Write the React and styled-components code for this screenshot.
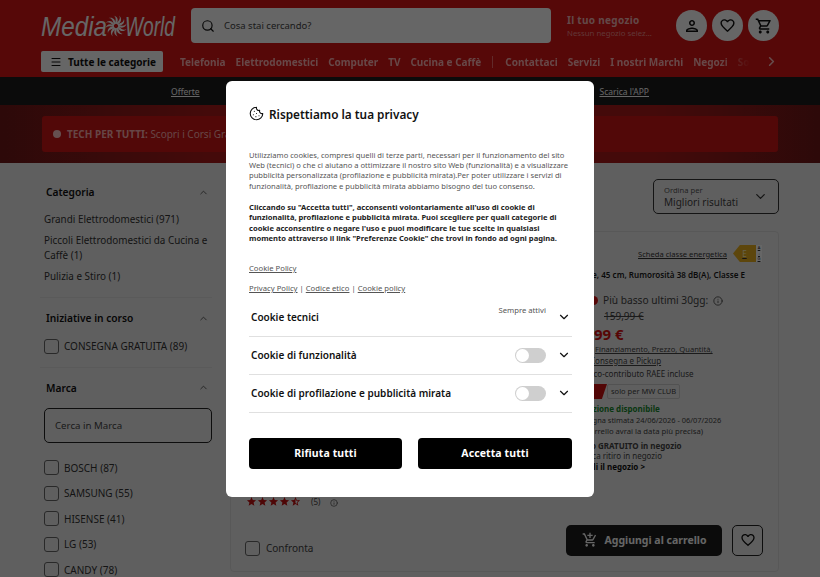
import React from "react";
import styled, { createGlobalStyle } from "styled-components";
import { Search, Menu, ChevronDown, ChevronUp, ChevronRight, Cookie, Info } from "lucide-react";
import { MdOutlinePerson, MdFavoriteBorder, MdOutlineShoppingCart, MdOutlineAddShoppingCart, MdStar, MdStarHalf } from "react-icons/md";

const GlobalStyle = createGlobalStyle`
  html, body { margin: 0; padding: 0; height: 577px; overflow: hidden; }
  body { font-family: "Noto Sans", sans-serif; background: #eeeeee; color: #1a1a1a; }
  * { box-sizing: border-box; }
`;

const Page = styled.div`
  position: relative;
  width: 820px;
  height: 577px;
  overflow: hidden;
`;

// header
const Header = styled.header`
  height: 77px;
  background: #d81414;
  padding: 8px 41px 0;
`;

const TopRow = styled.div`
  display: flex;
  align-items: center;
  height: 35px;
`;

const LogoSvg = styled.svg`
  width: 134px;
  height: 35px;
  flex: none;
  margin-right: 16px;
  overflow: visible;
`;

const SearchBar = styled.div`
  width: 360px;
  height: 35px;
  flex: none;
  background: #fff;
  border-radius: 4px;
  display: flex;
  align-items: center;
  gap: 9px;
  padding-left: 10px;
  font-size: 9.5px;
  color: #444;
`;

const Store = styled.div`
  margin-left: 16px;
  width: 109px;
  color: #fff;
`;

const StoreTitle = styled.div`
  font-size: 10px;
  font-weight: 700;
  letter-spacing: 0.3px;
  line-height: 14px;
  color: #f5b5b5;
`;

const StoreSub = styled.div`
  font-size: 7.8px;
  line-height: 12px;
  color: #f08a8a;
`;

const IconRow = styled.div`
  display: flex;
  gap: 5px;
  margin-left: auto;
`;

const RoundIcon = styled.div`
  width: 31px;
  height: 31px;
  border-radius: 50%;
  background: #fff;
  color: #111;
  display: flex;
  align-items: center;
  justify-content: center;
`;

const NavRow = styled.div`
  display: flex;
  align-items: center;
  margin-top: 8px;
  height: 21px;
`;

const AllButton = styled.div`
  width: 122px;
  height: 21px;
  flex: none;
  background: #fff;
  border-radius: 2px;
  display: flex;
  align-items: center;
  gap: 6px;
  padding-left: 9px;
  font-size: 10px;
  font-weight: 700;
  white-space: nowrap;
  color: #111;
  margin-right: 17px;
`;

const NavList = styled.nav`
  display: flex;
  align-items: center;
  gap: 10px;
  width: 582px;
  overflow: hidden;
  white-space: nowrap;
  mask-image: linear-gradient(to right, #000 93%, transparent 98%);
`;

const NavLink = styled.span`
  font-size: 10px;
  font-weight: 700;
  color: #ffb3b3;
`;

const NavDivider = styled.span`
  width: 1px;
  height: 12px;
  background: #f56a6a;
  margin: 0 2px 0 1px;
  flex: none;
`;

const NavArrow = styled.div`
  color: #ffc0c0;
  display: flex;
  margin-left: 2px;
`;

const BlackBar = styled.div`
  height: 28px;
  background: #1c1c1c;
  display: flex;
  align-items: center;
  justify-content: space-between;
  padding: 0 171px;
  font-size: 8.5px;
  color: #fff;
  text-decoration: underline;
`;

const PromoBand = styled.div`
  height: 58px;
  padding: 11px 42px 0;
  background: linear-gradient(to right, #701818 0%, #aa1a1a 25%, #aa1a1a 80%, #701818 100%);
`;

const PromoBox = styled.div`
  height: 36px;
  background: #cc1414;
  border-radius: 3px;
  display: flex;
  align-items: center;
  gap: 6px;
  padding-left: 11px;
  font-size: 10px;
  color: #ffb0b0;
`;

const PromoDot = styled.span`
  width: 8px;
  height: 8px;
  border-radius: 50%;
  background: #ffc8c8;
`;

const PromoStrong = styled.strong`
  font-weight: 700;
`;

// body
const Body = styled.div`
  display: flex;
  padding: 0 41px 0 40px;
`;

const Sidebar = styled.aside`
  width: 172px;
  flex: none;
  margin-right: 18px;
  padding-top: 16px;
`;

const FilterGroup = styled.section`
  padding: 0 0 ${(p) => p.$bottom ?? 7}px 4px;
  margin-bottom: 7px;
  border-bottom: ${(p) => (p.$last ? "none" : "1px solid #e0e0e0")};
`;

const FilterHead = styled.div`
  display: flex;
  justify-content: space-between;
  align-items: center;
  height: 26px;
  padding: 0 3px 0 2px;
  font-size: 10.2px;
  font-weight: 600;
  color: #111;
  margin-bottom: ${(p) => p.$gap ?? 4}px;
`;

const CategoryItem = styled.div`
  font-size: 9.9px;
  line-height: 15px;
  color: #333;
  margin-bottom: 6px;
`;

const CheckRow = styled.label`
  display: flex;
  align-items: center;
  gap: 5px;
  height: 16px;
  margin-bottom: 9.6px;
  font-size: 10px;
  color: #333;
`;

const CheckBox = styled.span`
  width: 15px;
  height: 15px;
  flex: none;
  border: 1px solid #666;
  border-radius: 3px;
`;

const BrandInput = styled.div`
  width: 168px;
  height: 35px;
  border: 1px solid #222;
  border-radius: 5px;
  display: flex;
  align-items: center;
  padding-left: 10px;
  font-size: 9.7px;
  color: #444;
  margin: 3px 0 17px;
`;

const Results = styled.main`
  flex: 1;
  padding-top: 16px;
`;

const SortWrap = styled.div`
  display: flex;
  justify-content: flex-end;
  margin-bottom: 17px;
`;

const SortBox = styled.div`
  width: 126px;
  height: 35px;
  border: 1px solid #333;
  border-radius: 5px;
  display: flex;
  align-items: center;
  justify-content: space-between;
  padding: 0 10px 0 10px;
`;

const SortLabel = styled.div`
  font-size: 7.6px;
  line-height: 10px;
  color: #555;
`;

const SortValue = styled.div`
  font-size: 10px;
  line-height: 14px;
  color: #444;
`;

const Card = styled.article`
  width: 549px;
  height: 341px;
  border: 1px solid #dcdcdc;
  border-radius: 4px;
  padding: 12px 15px 15px;
  display: flex;
  flex-direction: column;
`;

const CardMain = styled.div`
  display: grid;
  grid-template-columns: 325px minmax(0, 1fr);
  flex: 1;
  min-height: 0;
`;

const CardLeft = styled.div`
  display: flex;
  align-items: flex-end;
  gap: 10px;
  padding-bottom: 17px;
  font-size: 8px;
  color: #444;
`;

const Stars = styled.div`
  display: flex;
  color: #c40f0f;
`;

const CardInfo = styled.div`
  display: flex;
  flex-direction: column;
`;

const EnergyRow = styled.div`
  display: flex;
  justify-content: flex-end;
  align-items: center;
  gap: 6px;
  height: 19px;
  margin-right: 1px;
  font-size: 7.6px;
  color: #333;
  text-decoration: underline;
`;

const EnergyTag = styled.div`
  display: flex;
  align-items: stretch;
  height: 17px;
  text-decoration: none;
`;

const EnergyArrow = styled.div`
  width: 23px;
  background: #e8b020;
  clip-path: polygon(30% 0, 100% 0, 100% 100%, 30% 100%, 0 50%);
  font-size: 8px;
  line-height: 17px;
  text-align: center;
  color: #fff3c0;
`;

const EnergyScale = styled.div`
  width: 6px;
  font-size: 4px;
  line-height: 5.5px;
  text-align: center;
  background: #fff;
  color: #222;
`;

const ProductTitle = styled.div`
  display: flex;
  justify-content: flex-end;
  padding-right: 18px;
  font-size: 8.1px;
  font-weight: 600;
  line-height: 12px;
  color: #1a1a1a;
  white-space: nowrap;
  margin: 6px 0 12px;
`;

const Line = styled.div`
  display: flex;
  align-items: center;
  gap: ${(p) => p.$gap ?? 5}px;
  white-space: nowrap;
  padding-left: ${(p) => p.$indent ?? 0}px;
  font-size: ${(p) => p.$size ?? 8}px;
  line-height: ${(p) => p.$height ?? 11}px;
  font-weight: ${(p) => p.$weight ?? 400};
  color: ${(p) => p.$color ?? "#444"};
  margin-top: ${(p) => p.$top ?? 0}px;
  text-decoration: ${(p) => p.$deco ?? "none"};
`;

const LowDot = styled.span`
  width: 9px;
  height: 9px;
  border-radius: 50%;
  background: #d80f0f;
`;

const ClubChip = styled.div`
  display: flex;
  align-items: center;
  height: 15px;
  margin-top: 5px;
  padding-left: 19px;
`;

const ClubMark = styled.span`
  width: 17px;
  height: 15px;
  background: #cc1010;
  clip-path: polygon(0 0, 100% 0, 70% 100%, 0 100%);
`;

const ClubText = styled.span`
  height: 15px;
  border: 1px solid #ccc;
  border-radius: 2px;
  padding: 0 3px;
  font-size: 7.5px;
  line-height: 13px;
  color: #444;
`;

const CardFoot = styled.div`
  display: flex;
  align-items: center;
  height: 32px;
`;

const Compare = styled.label`
  display: flex;
  align-items: center;
  gap: 6px;
  margin: 16px 0 0 -1px;
  font-size: 10px;
  color: #444;
`;

const CartButton = styled.div`
  width: 156px;
  height: 31px;
  margin-left: auto;
  background: #1c1c1c;
  border-radius: 5px;
  color: #fff;
  display: flex;
  align-items: center;
  justify-content: center;
  gap: 7px;
  font-size: 10.5px;
  font-weight: 700;
`;

const WishButton = styled.div`
  width: 31px;
  height: 31px;
  margin-left: 10px;
  border: 1px solid #222;
  border-radius: 5px;
  display: flex;
  align-items: center;
  justify-content: center;
  color: #111;
`;

// overlay and modal
const Overlay = styled.div`
  position: absolute;
  inset: 0;
  background: rgba(0, 0, 0, 0.6);
  display: flex;
  align-items: center;
  justify-content: center;
`;

const Modal = styled.div`
  width: 368px;
  height: 416px;
  background: #fff;
  border-radius: 6px;
  padding: 23px 22px 28px 23px;
  display: flex;
  flex-direction: column;
`;

const ModalTitle = styled.h2`
  display: flex;
  align-items: center;
  gap: 5px;
  margin: 0 0 26px;
  height: 20px;
  font-size: 11.8px;
  font-weight: 600;
  color: #111;
`;

const Copy = styled.p`
  margin: 0 0 ${(p) => p.$bottom ?? 10}px;
  font-size: 7.6px;
  line-height: ${(p) => (p.$strong ? 10.2 : 10.4)}px;
  font-weight: ${(p) => (p.$strong ? 700 : 400)};
  color: ${(p) => (p.$strong ? "#222" : "#555")};
`;

const PolicyLine = styled.div`
  font-size: 7.7px;
  line-height: 12px;
  color: #555;
  margin-bottom: ${(p) => p.$bottom ?? 0}px;
`;

const PolicyLink = styled.span`
  text-decoration: underline;
`;

const Accordion = styled.div`
  display: flex;
  flex-direction: column;
`;

const AccRow = styled.div`
  position: relative;
  height: 38px;
  display: flex;
  align-items: center;
  padding: 0 1px 0 2px;
  border-bottom: 1px solid #e0e0e0;
  font-size: 10px;
  font-weight: 600;
  color: #111;
`;

const AlwaysOn = styled.span`
  position: absolute;
  right: 26px;
  top: 6px;
  font-size: 7.7px;
  font-weight: 400;
  color: #555;
`;

const Toggle = styled.span`
  width: 31px;
  height: 15px;
  border-radius: 8px;
  background: #cfcfcf;
  position: relative;
  margin-left: auto;
  &::after {
    content: "";
    position: absolute;
    left: 1px;
    top: 1px;
    width: 13px;
    height: 13px;
    border-radius: 50%;
    background: #fff;
  }
`;

const AccChevron = styled.span`
  display: flex;
  margin-left: ${(p) => (p.$auto ? "auto" : "11px")};
`;

const ModalActions = styled.div`
  display: grid;
  grid-template-columns: 153px 154px;
  justify-content: space-between;
  margin-top: auto;
`;

const ModalButton = styled.button`
  height: 31px;
  border: none;
  border-radius: 4px;
  background: #000;
  color: #fff;
  font-family: inherit;
  font-size: 10.5px;
  font-weight: 700;
  letter-spacing: 0.1px;
`;

const swirl = Array.from({ length: 12 }, (_, i) => i * 30);

function Logo() {
  return (
    <LogoSvg viewBox="0 0 134 35">
      <text x="0" y="28" textLength="66" lengthAdjust="spacingAndGlyphs" fontFamily="Liberation Sans" fontStyle="italic" fontSize="28" fill="#fff">
        Media
      </text>
      <g transform="translate(75 18)">
        {swirl.map((a) => (
          <path key={a} d="M0 -2.5C3 -5 5 -8 3 -10.5C6 -8 6 -4 1.5 -1.5Z" fill="#fff" transform={`rotate(${a})`} />
        ))}
      </g>
      <text x="84" y="28" textLength="50" lengthAdjust="spacingAndGlyphs" fontFamily="Liberation Sans" fontStyle="italic" fontSize="28" fill="#fff">
        World
      </text>
    </LogoSvg>
  );
}

const brands = ["BOSCH (87)", "SAMSUNG (55)", "HISENSE (41)", "LG (53)", "CANDY (78)"];

export default function App() {
  return (
    <Page>
      <GlobalStyle />
      <Header>
        <TopRow>
          <Logo />
          <SearchBar>
            <Search size={14} color="#111" strokeWidth={2} />
            Cosa stai cercando?
          </SearchBar>
          <Store>
            <StoreTitle>Il tuo negozio</StoreTitle>
            <StoreSub>Nessun negozio selez...</StoreSub>
          </Store>
          <IconRow>
            <RoundIcon><MdOutlinePerson size={18} /></RoundIcon>
            <RoundIcon><MdFavoriteBorder size={17} /></RoundIcon>
            <RoundIcon><MdOutlineShoppingCart size={18} /></RoundIcon>
          </IconRow>
        </TopRow>
        <NavRow>
          <AllButton>
            <Menu size={12} strokeWidth={2} />
            Tutte le categorie
          </AllButton>
          <NavList>
            <NavLink>Telefonia</NavLink>
            <NavLink>Elettrodomestici</NavLink>
            <NavLink>Computer</NavLink>
            <NavLink>TV</NavLink>
            <NavLink>Cucina e Caffè</NavLink>
            <NavDivider />
            <NavLink>Contattaci</NavLink>
            <NavLink>Servizi</NavLink>
            <NavLink>I nostri Marchi</NavLink>
            <NavLink>Negozi</NavLink>
            <NavLink>Sostenibilità</NavLink>
          </NavList>
          <NavArrow><ChevronRight size={15} strokeWidth={2.5} /></NavArrow>
        </NavRow>
      </Header>
      <BlackBar>
        <span>Offerte</span>
        <span>Scarica l'APP</span>
      </BlackBar>
      <PromoBand>
        <PromoBox>
          <PromoDot />
          <span><PromoStrong>TECH PER TUTTI:</PromoStrong> Scopri i Corsi Gratuiti</span>
        </PromoBox>
      </PromoBand>
      <Body>
        <Sidebar>
          <FilterGroup>
            <FilterHead $gap={7}>Categoria<ChevronUp size={11} color="#555" /></FilterHead>
            <CategoryItem>Grandi Elettrodomestici (971)</CategoryItem>
            <CategoryItem>Piccoli Elettrodomestici da Cucina e Caffè (1)</CategoryItem>
            <CategoryItem>Pulizia e Stiro (1)</CategoryItem>
          </FilterGroup>
          <FilterGroup $bottom={3}>
            <FilterHead $gap={7}>Iniziative in corso<ChevronUp size={11} color="#555" /></FilterHead>
            <CheckRow><CheckBox />CONSEGNA GRATUITA (89)</CheckRow>
          </FilterGroup>
          <FilterGroup $last>
            <FilterHead $gap={7}>Marca<ChevronUp size={11} color="#555" /></FilterHead>
            <BrandInput>Cerca in Marca</BrandInput>
            {brands.map((b) => (
              <CheckRow key={b}><CheckBox />{b}</CheckRow>
            ))}
          </FilterGroup>
        </Sidebar>
        <Results>
          <SortWrap>
            <SortBox>
              <div>
                <SortLabel>Ordina per</SortLabel>
                <SortValue>Migliori risultati</SortValue>
              </div>
              <ChevronDown size={15} color="#333" />
            </SortBox>
          </SortWrap>
          <Card>
            <CardMain>
              <CardLeft>
                <Stars>
                  <MdStar size={11} /><MdStar size={11} /><MdStar size={11} /><MdStar size={11} /><MdStarHalf size={11} />
                </Stars>
                (5)
                <Info size={8} />
              </CardLeft>
              <CardInfo>
                <EnergyRow>
                  Scheda classe energetica
                  <EnergyTag>
                    <EnergyArrow>E</EnergyArrow>
                    <EnergyScale>A<br />↓<br />G</EnergyScale>
                  </EnergyTag>
                </EnergyRow>
                <ProductTitle>Lavastoviglie, 45 cm, Rumorosità 38 dB(A), Classe E</ProductTitle>
                <Line $size={10.2} $height={15} $indent={18}>
                  <LowDot />Più basso ultimi 30gg:<Info size={10} />
                </Line>
                <Line $size={10} $height={16} $indent={33} $deco="line-through">159,99 €</Line>
                <Line $size={15} $height={20} $weight={700} $color="#d80f0f" $indent={23}>99 €</Line>
                <Line $size={7.6} $indent={24} $deco="underline">Finanziamento, Prezzo, Quantità,</Line>
                <Line $indent={19} $deco="underline">Consegna e Pickup</Line>
                <Line $indent={18} $top={2}>Eco-contributo RAEE incluse</Line>
                <ClubChip><ClubMark /><ClubText>solo per MW CLUB</ClubText></ClubChip>
                <Line $weight={700} $color="#178a2e" $top={5} $height={10}>Spedizione disponibile</Line>
                <Line $size={7.45} $height={10.5} $top={1}>Consegna stimata 24/06/2026 - 06/07/2026</Line>
                <Line $size={7.7} $height={10}>(nel carrello avrai la data più precisa)</Line>
                <Line $weight={700} $top={5} $height={10.5} $indent={3}>Ritiro GRATUITO in negozio</Line>
                <Line $height={10.5} $indent={2}>Verifica ritiro in negozio</Line>
                <Line $weight={700} $color="#111" $height={10} $indent={4}>Scegli il negozio &gt;</Line>
              </CardInfo>
            </CardMain>
            <CardFoot>
              <Compare><CheckBox />Confronta</Compare>
              <CartButton><MdOutlineAddShoppingCart size={16} />Aggiungi al carrello</CartButton>
              <WishButton><MdFavoriteBorder size={16} /></WishButton>
            </CardFoot>
          </Card>
        </Results>
      </Body>
      <Overlay>
        <Modal>
          <ModalTitle><Cookie size={15} strokeWidth={1.8} />Rispettiamo la tua privacy</ModalTitle>
          <Copy $bottom={11}>
            Utilizziamo cookies, compresi quelli di terze parti, necessari per il funzionamento del sito Web (tecnici) o che ci aiutano a ottimizzare il nostro sito Web (funzionalità) e a visualizzare pubblicità personalizzata (profilazione e pubblicità mirata).Per poter utilizzare i servizi di funzionalità, profilazione e pubblicità mirata abbiamo bisogno del tuo consenso.
          </Copy>
          <Copy $strong $bottom={19}>
            Cliccando su "Accetta tutti", acconsenti volontariamente all'uso di cookie di funzionalità, profilazione e pubblicità mirata. Puoi scegliere per quali categorie di cookie acconsentire o negare l'uso e puoi modificare le tue scelte in qualsiasi momento attraverso il link "Preferenze Cookie" che trovi in fondo ad ogni pagina.
          </Copy>
          <PolicyLine $bottom={8}><PolicyLink>Cookie Policy</PolicyLink></PolicyLine>
          <PolicyLine $bottom={5}>
            <PolicyLink>Privacy Policy</PolicyLink> | <PolicyLink>Codice etico</PolicyLink> | <PolicyLink>Cookie policy</PolicyLink>
          </PolicyLine>
          <Accordion>
            <AccRow>
              Cookie tecnici
              <AlwaysOn>Sempre attivi</AlwaysOn>
              <AccChevron $auto><ChevronDown size={14} strokeWidth={2} /></AccChevron>
            </AccRow>
            <AccRow>
              Cookie di funzionalità
              <Toggle />
              <AccChevron><ChevronDown size={14} strokeWidth={2} /></AccChevron>
            </AccRow>
            <AccRow>
              Cookie di profilazione e pubblicità mirata
              <Toggle />
              <AccChevron><ChevronDown size={14} strokeWidth={2} /></AccChevron>
            </AccRow>
          </Accordion>
          <ModalActions>
            <ModalButton>Rifiuta tutti</ModalButton>
            <ModalButton>Accetta tutti</ModalButton>
          </ModalActions>
        </Modal>
      </Overlay>
    </Page>
  );
}
